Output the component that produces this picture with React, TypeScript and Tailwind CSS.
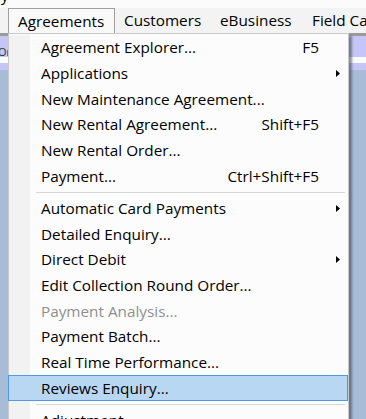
import React from "react";

type Item = {
  label?: string;
  shortcut?: string;
  sub?: boolean;
  disabled?: boolean;
  active?: boolean;
  sep?: boolean;
};

const items: Item[] = [
  { label: "Agreement Explorer...", shortcut: "F5" },
  { label: "Applications", sub: true },
  { label: "New Maintenance Agreement..." },
  { label: "New Rental Agreement...", shortcut: "Shift+F5" },
  { label: "New Rental Order..." },
  { label: "Payment...", shortcut: "Ctrl+Shift+F5" },
  { sep: true },
  { label: "Automatic Card Payments", sub: true },
  { label: "Detailed Enquiry..." },
  { label: "Direct Debit", sub: true },
  { label: "Edit Collection Round Order..." },
  { label: "Payment Analysis...", disabled: true },
  { label: "Payment Batch..." },
  { label: "Real Time Performance..." },
  { label: "Reviews Enquiry...", active: true },
  { sep: true },
  { label: "Adjustment" },
];

const menuBar = [
  { label: "Agreements", w: "w-[107px]", open: true },
  { label: "Customers", w: "w-[96px]" },
  { label: "eBusiness", w: "w-[92px]" },
  { label: "Field Care", w: "w-[80px]" },
];

function Arrow() {
  return (
    <svg width="4" height="7" viewBox="0 0 4 7" className="block">
      <path d="M0 0 L4 3.5 L0 7 Z" fill="#000" />
    </svg>
  );
}

function MenuRow({ item }: { item: Item }) {
  if (item.sep) {
    return (
      <div className="h-[6.4px] flex items-center">
        <div className="w-[21px] self-stretch bg-[#f2f2f2] shrink-0" />
        <div className="h-px flex-1 ml-[6px] mr-[3px] bg-[#d7d7d7]" />
      </div>
    );
  }
  if (item.active) {
    return (
      <div className="h-[25.7px] -ml-px flex items-center bg-[#b8d7f3] border border-[#4d9be3]">
        <div className="w-[32px] shrink-0" />
        <span className="flex-1 whitespace-nowrap">{item.label}</span>
        <div className="w-[29px]" />
      </div>
    );
  }
  return (
    <div className="h-[25.7px] flex items-center">
      <div className="w-[21px] self-stretch bg-[#f2f2f2] mr-[11px] shrink-0" />
      <span className={`flex-1 whitespace-nowrap ${item.disabled ? "text-[#8f8f8f]" : "text-black"}`}>
        {item.label}
      </span>
      {item.shortcut && <span className="whitespace-nowrap">{item.shortcut}</span>}
      <div className="w-[29px] flex justify-end pr-[8px]">{item.sub && <Arrow />}</div>
    </div>
  );
}

export default function App() {
  return (
    <div
      className="relative w-[366px] h-[419px] overflow-hidden bg-[#a9bcd7] text-[15.3px] text-black"
      style={{ fontFamily: '"Segoe UI", "Open Sans", sans-serif' }}
    >
      {/* title strip */}
      <div className="h-[8px] bg-[#fbfbfb] relative overflow-hidden">
        <span className="absolute left-[1px] -top-[12px] text-[15px] leading-none">y</span>
      </div>

      {/* menu bar */}
      <div className="h-[25px] bg-[#f3f3f3] flex pl-[8px]">
        {menuBar.map((m) => (
          <div
            key={m.label}
            className={`${m.w} shrink-0 flex items-center pl-[9px] whitespace-nowrap ${
              m.open ? "bg-[#f9f9f9] border border-b-0 border-[#a0a0a0]" : ""
            }`}
          >
            {m.label}
          </div>
        ))}
      </div>

      {/* workspace behind */}
      <div className="h-[3px] bg-[#9a9a9a]" />
      <div className="flex flex-col">
        <div className="h-[21px] bg-[#c5c6f6] flex items-end">
          <span className="text-[11px] -ml-[2px] leading-none text-[#333]">Or</span>
        </div>
        <div className="h-[6px] bg-[#fbfbfb]" />
        <div className="h-[7px] bg-[#c5c6f6]" />
      </div>

      {/* dropdown */}
      <div className="absolute left-[8px] top-[33px] w-[341px] bg-[#fcfcfc] border border-[#c9c9c9] py-[1px] shadow-[3px_3px_2px_rgba(60,60,70,0.55)]">
        {items.map((it, i) => (
          <MenuRow key={i} item={it} />
        ))}
      </div>
    </div>
  );
}
